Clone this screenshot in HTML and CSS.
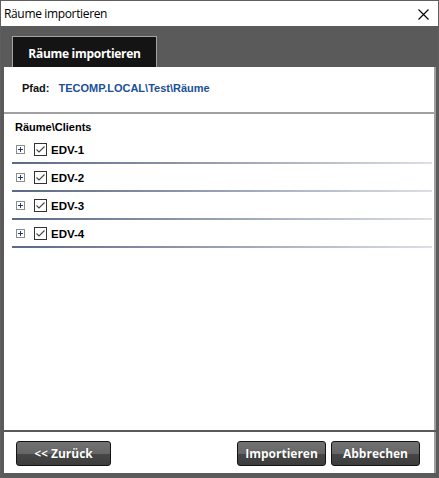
FILE: index.html
```html
<!DOCTYPE html>
<html lang="de">
<head>
<meta charset="utf-8">
<title>Räume importieren</title>
<link rel="stylesheet" href="styles.css">
</head>
<body>
<div class="window">
  <div class="titlebar">
    <span class="title">Räume importieren</span>
    <span class="close">
      <svg width="11" height="11" viewBox="0 0 11 11"><path d="M0.5 0.5 L10.5 10.5 M10.5 0.5 L0.5 10.5" stroke="#000" stroke-width="1.1" fill="none"/></svg>
    </span>
  </div>
  <div class="frame">
    <div class="tabs">
      <div class="tab">Räume importieren</div>
    </div>
    <div class="panel path">
      <span class="path-label">Pfad:</span>
      <span class="path-value">TECOMP.LOCAL\Test\Räume</span>
    </div>
    <div class="panel tree">
      <div class="tree-head">Räume\Clients</div>
      <div class="node">
        <div class="node-row">
          <span class="expander"><svg width="9" height="9" viewBox="0 0 9 9"><rect x="0.5" y="0.5" width="8" height="8" fill="#fff" stroke="#8c8c8c"/><path d="M2 4.5 H7 M4.5 2 V7" stroke="#1e3c78" stroke-width="1"/></svg></span>
          <span class="check"><svg width="13" height="13" viewBox="0 0 13 13"><rect x="0.5" y="0.5" width="12" height="12" fill="#fff" stroke="#333"/><path d="M2.5 6.5 L5 9 L10.5 3.5" stroke="#444" stroke-width="1.1" fill="none"/></svg></span>
          <span class="node-label">EDV-1</span>
        </div>
        <div class="bar"></div>
      </div>
      <div class="node">
        <div class="node-row">
          <span class="expander"><svg width="9" height="9" viewBox="0 0 9 9"><rect x="0.5" y="0.5" width="8" height="8" fill="#fff" stroke="#8c8c8c"/><path d="M2 4.5 H7 M4.5 2 V7" stroke="#1e3c78" stroke-width="1"/></svg></span>
          <span class="check"><svg width="13" height="13" viewBox="0 0 13 13"><rect x="0.5" y="0.5" width="12" height="12" fill="#fff" stroke="#333"/><path d="M2.5 6.5 L5 9 L10.5 3.5" stroke="#444" stroke-width="1.1" fill="none"/></svg></span>
          <span class="node-label">EDV-2</span>
        </div>
        <div class="bar"></div>
      </div>
      <div class="node">
        <div class="node-row">
          <span class="expander"><svg width="9" height="9" viewBox="0 0 9 9"><rect x="0.5" y="0.5" width="8" height="8" fill="#fff" stroke="#8c8c8c"/><path d="M2 4.5 H7 M4.5 2 V7" stroke="#1e3c78" stroke-width="1"/></svg></span>
          <span class="check"><svg width="13" height="13" viewBox="0 0 13 13"><rect x="0.5" y="0.5" width="12" height="12" fill="#fff" stroke="#333"/><path d="M2.5 6.5 L5 9 L10.5 3.5" stroke="#444" stroke-width="1.1" fill="none"/></svg></span>
          <span class="node-label">EDV-3</span>
        </div>
        <div class="bar"></div>
      </div>
      <div class="node">
        <div class="node-row">
          <span class="expander"><svg width="9" height="9" viewBox="0 0 9 9"><rect x="0.5" y="0.5" width="8" height="8" fill="#fff" stroke="#8c8c8c"/><path d="M2 4.5 H7 M4.5 2 V7" stroke="#1e3c78" stroke-width="1"/></svg></span>
          <span class="check"><svg width="13" height="13" viewBox="0 0 13 13"><rect x="0.5" y="0.5" width="12" height="12" fill="#fff" stroke="#333"/><path d="M2.5 6.5 L5 9 L10.5 3.5" stroke="#444" stroke-width="1.1" fill="none"/></svg></span>
          <span class="node-label">EDV-4</span>
        </div>
        <div class="bar"></div>
      </div>
    </div>
    <div class="panel footer">
      <button class="btn btn-back">&lt;&lt; Zurück</button>
      <div class="spacer"></div>
      <button class="btn">Importieren</button>
      <button class="btn">Abbrechen</button>
    </div>
  </div>
</div>
</body>
</html>
```

FILE: styles.css
```css
* { box-sizing: border-box; }
html, body { margin: 0; padding: 0; }
body {
  width: 439px;
  height: 478px;
  background: #fff;
  font-family: "Open Sans", "Liberation Sans", sans-serif;
}
.window {
  width: 439px;
  height: 478px;
  border: 1px solid #5e5e5e;
  display: flex;
  flex-direction: column;
  background: #5a5a5a;
}
.titlebar {
  height: 25px;
  background: #fff;
  display: flex;
  align-items: center;
  padding-left: 3px;
  padding-right: 9px;
}
.title {
  flex: 1;
  font-size: 12px;
  letter-spacing: -0.35px;
  color: #000;
  line-height: 25px;
}
.close {
  display: flex;
  margin-top: 1px;
}
.frame {
  flex: 1;
  display: flex;
  flex-direction: column;
  padding: 10px 2px 4px 3px;
  background: #5a5a5a;
}
.tabs {
  display: flex;
  padding-left: 8px;
  height: 31px;
}
.tab {
  width: 145px;
  background: #141414;
  border: 1px solid #a3a3a3;
  border-bottom: none;
  color: #fff;
  font-weight: 700;
  font-size: 12px;
  letter-spacing: -0.3px;
  display: flex;
  align-items: center;
  justify-content: center;
  padding-top: 3px;
}
.panel {
  background: #fff;
  border-right: 2px solid #a0a0a0;
}
.path {
  height: 47px;
  border-bottom: 2px solid #a0a0a0;
  display: flex;
  align-items: center;
  padding-left: 18px;
  padding-bottom: 3px;
  font-family: "Liberation Sans", Arial, sans-serif;
  font-weight: 700;
  font-size: 11px;
}
.path-label { color: #111; margin-right: 9px; }
.path-value { color: #1b4f98; }
.tree {
  flex: 1;
  padding: 7px 0 0 8px;
  font-family: "Liberation Sans", Arial, sans-serif;
  font-weight: 700;
  font-size: 11px;
  color: #000;
}
.tree-head {
  height: 15px;
  line-height: 13px;
  padding-left: 3px;
}
.node {
  display: flex;
  flex-direction: column;
}
.node-row {
  height: 26px;
  display: flex;
  align-items: center;
  padding-left: 4px;
  padding-top: 1px;
}
.expander { display: flex; margin-right: 9px; }
.check { display: flex; margin-right: 4px; }
.node-label { font-size: 11.5px; }
.bar {
  height: 2px;
  margin-right: 2px;
  background: linear-gradient(to right, #5a6984 0%, #98a2b4 50%, #dcdfe4 100%);
}
.footer {
  margin-top: 2px;
  height: 41px;
  display: flex;
  align-items: flex-start;
  padding: 9px 14px 0 12px;
  gap: 5px;
}
.spacer { flex: 1; }
.btn {
  height: 25px;
  width: 89px;
  border: 1px solid #141414;
  border-radius: 3px;
  background: linear-gradient(to bottom, #727272 0%, #666 50%, #474747 50%, #3c3c3c 100%);
  color: #fff;
  font-family: "Open Sans", "Liberation Sans", sans-serif;
  font-weight: 700;
  font-size: 12px;
  padding: 0;
  line-height: 21px;
  text-shadow: 0 0 1px rgba(0,0,0,0.5);
}
.btn-back { width: 95px; }
```
